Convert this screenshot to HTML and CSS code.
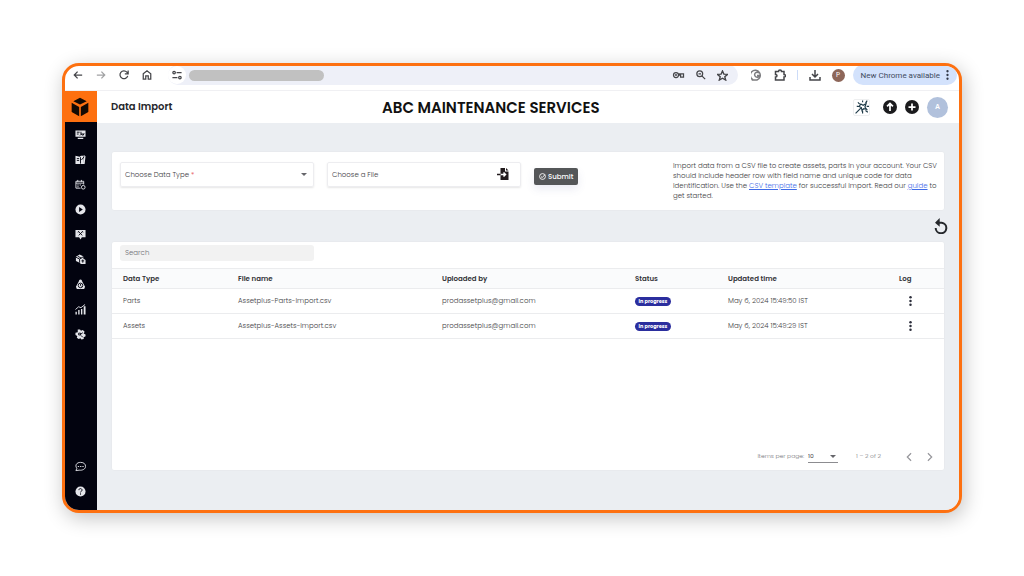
FILE: index.html
```html
<!DOCTYPE html>
<html lang="en">
<head>
    <meta charset="UTF-8">
    <meta name="viewport" content="width=device-width, initial-scale=1.0">
    <title>Data Import</title>
    <link rel="stylesheet" href="styles.css">
</head>
<body>
    <div class="browser">
        <div class="toolbar">
            <div class="nav-buttons">
                <button aria-label="Back"><svg viewBox="0 0 24 24"><path d="M22 12H4M11 4l-8 8 8 8"/></svg></button>
                <button class="disabled" aria-label="Forward"><svg viewBox="0 0 24 24"><path d="M2 12h18M13 4l8 8-8 8"/></svg></button>
                <button aria-label="Reload"><svg viewBox="0 0 24 24"><path d="M21 14a9.500 9.500 0 1 1-2-9l2 3M22 1v8h-8"/></svg></button>
                <button aria-label="Home"><svg viewBox="0 0 24 24"><path d="M3 9l9-7 9 7v13h-6v-8H9v8H3z"/></svg></button>
            </div>
            <div class="omnibox">
                <button class="site-info" aria-label="Site information"><svg viewBox="0 0 24 24"><circle cx="5" cy="6" r="3"/><path d="M11 6h12M1 18h12"/><circle cx="19" cy="18" r="3"/></svg></button>
                <span class="address"></span>
                <button aria-label="Passwords"><svg class="wide" viewBox="0 0 28 24"><circle cx="8" cy="12" r="6"/><circle cx="8" cy="12" r="1"/><path d="M14 9h12v8h-7v-5h-5"/></svg></button>
                <button aria-label="Zoom"><svg viewBox="0 0 24 24"><circle cx="9" cy="9" r="7"/><path d="M14 14l8 8M6 9h6"/></svg></button>
                <button aria-label="Bookmark"><svg class="star" viewBox="0 0 24 24"><path d="M12 2l3 7 8 .6-6 5 2 7.400-7-4-7 4 2-7.400-6-5L9 9z"/></svg></button>
            </div>
            <div class="extensions">
                <button class="muted" aria-label="Grammar"><svg viewBox="0 0 24 24"><path d="M3 21a10 10 0 1 1 9 1H3zM16 8a5 5 0 1 0 1 5h-5"/></svg></button>
                <button aria-label="Extensions"><svg viewBox="0 0 24 24"><path d="M3 5h6c0-4 6-4 6 0h5v6c4 0 4 5 0 5v6H3v-6c4 0 4-5 0-5z"/></svg></button>
                <span class="separator"></span>
                <button aria-label="Downloads"><svg viewBox="0 0 24 24"><path d="M12 2v13M6 10l6 6 6-6M2 16v6h20v-6"/></svg></button>
                <button class="profile" aria-label="Profile">P</button>
            </div>
            <button class="update">New Chrome available
                <svg viewBox="0 0 6 24"><circle cx="3" cy="3" r="2.800"/><circle cx="3" cy="12" r="2.800"/><circle cx="3" cy="21" r="2.800"/></svg>
            </button>
        </div>

        <div class="app">
            <nav class="sidebar">
                <a href="#" class="logo" aria-label="Home"><svg viewBox="0 0 24 24"><path d="M12 1l8 4-8 4-8-4zM2 7l9 5v11l-9-5zM22 7l-9 5v11l9-5z"/></svg></a>
                <a href="#" aria-label="Dashboard"><svg viewBox="0 0 24 24"><path d="M1 3h22v14H1zM6 19h12v3H6z"/><path class="cut" d="M4 7h6M4 11h4M13 6v5h7M11 14l3-3 3 3 3-4"/></svg></a>
                <a href="#" aria-label="Work orders"><svg viewBox="0 0 24 24"><path d="M1 4l9 2 3-2h5v18H1zM19 2l4 3-2 17h-3z"/><path class="cut" d="M4 10h5M4 14h5M12 7v14M14 13l6-7"/></svg></a>
                <a href="#" aria-label="Calendar"><svg viewBox="0 0 24 24"><path class="line" d="M2 5h17v7M2 5v15h10M2 9h17M6 2v4M14 2v4M5 13h3M10 13h3M5 17h3"/><circle class="line" cx="18" cy="18" r="4"/></svg></a>
                <a href="#" aria-label="Run"><svg viewBox="0 0 24 24"><circle cx="12" cy="12" r="11"/><path class="hole" d="M9 6.500l8 5.500-8 5.500z"/></svg></a>
                <a href="#" aria-label="Requests"><svg viewBox="0 0 24 24"><path d="M1 2h22v16h-8l-3 5-3-5H1z"/><path class="cut" d="M8 6l8 8M16 6l-8 8M6 7l3-2M15 5l3 2"/></svg></a>
                <a href="#" aria-label="Assets"><svg viewBox="0 0 24 24"><path d="M10 1l8 4v5l5 3v9H13l-3-3-8-4V6z"/><path class="cut" d="M2 7l8 4 8-5M10 11v8M6 5l8 4M14 15h6M17 12v7"/></svg></a>
                <a href="#" aria-label="Alerts"><svg viewBox="0 0 24 24"><path d="M12 1c3 0 3 3 4 5l6 11-2 5H4l-2-5L8 6c1-2 1-5 4-5z"/><circle class="cut" cx="12" cy="14" r="5"/><path class="cut" d="M12 11v3l2 2"/></svg></a>
                <a href="#" aria-label="Reports"><svg viewBox="0 0 24 24"><path d="M1 17h3v6H1zM7 13h3v10H7zM13 11h3v12h-3zM19 5h4v18h-4z"/><path class="line" d="M1 12l7-6 5 2 9-7"/></svg></a>
                <a href="#" aria-label="Settings"><svg viewBox="0 0 24 24"><path d="M6 1h5l2 3 4-2 4 4-2 4 4 2v4l-4 2v4l-5 1-2-3-4 2-4-3 1-4-4-2V8l5-1z"/><path class="cut" d="M8 9h4v4H8zM13 14l4 4M17 8l-4 3"/></svg></a>
                <a href="#" class="chat" aria-label="Chat"><svg viewBox="0 0 24 24"><path class="line" d="M2 21l2-5C-1 9 4 3 12 3s11 4 11 9-6 9-14 8z"/><path class="line" d="M6 12h3M11 12h3M16 12h3"/></svg></a>
                <a href="#" class="help" aria-label="Help"><svg viewBox="0 0 24 24"><circle cx="12" cy="12" r="11"/><path class="cut" d="M8.500 9c0-5 7-4 7 0 0 3-3.500 2-3.500 5M12 16v3"/></svg></a>
            </nav>

            <div class="page">
                <header class="page-header">
                    <h1>Data Import</h1>
                    <h2>ABC MAINTENANCE SERVICES</h2>
                    <div class="header-actions">
                        <button class="magic" aria-label="Assistant"><svg viewBox="0 0 24 24"><path d="M1 23l9-9M10 7l4 2 5-3-2 6 3 4-5-1-3 3-1-5-4-2zM13 1v3M5 4l3 3M21 1l-3 4M20 11h4M18 18l4 3M13 19v4M3 11h3"/></svg></button>
                        <button aria-label="Upload"><svg viewBox="0 0 24 24"><circle cx="12" cy="12" r="12"/><path class="mark" d="M12 19V7M7 11l5-5 5 5"/></svg></button>
                        <button aria-label="Add"><svg viewBox="0 0 24 24"><circle cx="12" cy="12" r="12"/><path class="mark" d="M12 6v12M6 12h12"/></svg></button>
                        <button class="avatar" aria-label="Account">A</button>
                    </div>
                </header>

                <main>
                    <form class="card import-form">
                        <div class="field select-box">
                            <label for="data-type">Choose Data Type <span class="required">*</span></label>
                            <select id="data-type">
                                <option value=""></option>
                                <option>Parts</option>
                                <option>Assets</option>
                            </select>
                        </div>
                        <div class="field">
                            <label for="csv-file">Choose a File</label>
                            <input type="file" id="csv-file">
                            <svg class="file-icon" viewBox="0 0 24 24"><path d="M7 0h9v7h7v17H7z"/><path d="M18 0l5 5h-5z"/><path class="arrow" d="M7 13h10M13 9l4 4-4 4"/><path class="tail" d="M0 13h7"/></svg>
                        </div>
                        <button type="submit" class="submit-btn">
                            <svg viewBox="0 0 24 24"><circle cx="12" cy="12" r="10"/><path d="M7 12l4 4 9-10"/></svg>
                            Submit
                        </button>
                        <p class="hint">Import data from a CSV file to create assets, parts in your account. Your CSV should include header row with field name and unique code for data identification. Use the <a href="#">CSV template</a> for successful import. Read our <a href="#">guide</a> to get started.</p>
                    </form>

                    <div class="refresh-row">
                        <button aria-label="Refresh"><svg viewBox="0 0 24 24"><path d="M6 7h7a8 8 0 1 1-9 8"/><path class="head" d="M10 0v13L3 7z"/></svg></button>
                    </div>

                    <section class="card table-card">
                        <input type="search" class="search" placeholder="Search" aria-label="Search">
                        <table>
                            <colgroup>
                                <col class="col-type"><col class="col-file"><col class="col-user"><col class="col-status"><col class="col-time"><col class="col-log">
                            </colgroup>
                            <thead>
                                <tr><th>Data Type</th><th>File name</th><th>Uploaded by</th><th>Status</th><th>Updated time</th><th>Log</th></tr>
                            </thead>
                            <tbody>
                                <tr>
                                    <td>Parts</td>
                                    <td>Assetplus-Parts-import.csv</td>
                                    <td>prodassetplus@gmail.com</td>
                                    <td><span class="badge">In progress</span></td>
                                    <td>May 6, 2024 15:49:50 IST</td>
                                    <td><button class="more" aria-label="Log"><svg viewBox="0 0 6 24"><circle cx="3" cy="3" r="3"/><circle cx="3" cy="12" r="3"/><circle cx="3" cy="21" r="3"/></svg></button></td>
                                </tr>
                                <tr>
                                    <td>Assets</td>
                                    <td>Assetplus-Assets-import.csv</td>
                                    <td>prodassetplus@gmail.com</td>
                                    <td><span class="badge">In progress</span></td>
                                    <td>May 6, 2024 15:49:29 IST</td>
                                    <td><button class="more" aria-label="Log"><svg viewBox="0 0 6 24"><circle cx="3" cy="3" r="3"/><circle cx="3" cy="12" r="3"/><circle cx="3" cy="21" r="3"/></svg></button></td>
                                </tr>
                            </tbody>
                        </table>
                        <div class="paginator">
                            <label for="page-size">Items per page:</label>
                            <div class="page-size select-box">
                                <select id="page-size">
                                    <option>10</option>
                                    <option>25</option>
                                </select>
                            </div>
                            <span class="range">1 – 2 of 2</span>
                            <button aria-label="Previous page"><svg viewBox="0 0 24 24"><path d="M17 3l-9 9 9 9"/></svg></button>
                            <button aria-label="Next page"><svg viewBox="0 0 24 24"><path d="M7 3l9 9-9 9"/></svg></button>
                        </div>
                    </section>
                </main>
            </div>
        </div>
    </div>
</body>
</html>
```
FILE: styles.css
```css
:root {
    --orange: #fd7010;
    --navy: #02030f;
    --page-bg: #ebeef2;
    --omnibox: #eef0f8;
    --text: #3c3c42;
    --line: #ebecee;
}

* {
    margin: 0;
    padding: 0;
    box-sizing: border-box;
    font-family: Poppins, Inter, sans-serif;
}

body {
    min-height: 100vh;
    display: flex;
    padding: 63px 62px;
    background-color: white;
    color: var(--text);
    font-size: 7px;
    font-weight: 300;
}

button {
    display: flex;
    align-items: center;
    justify-content: center;
    border: none;
    background: none;
    color: inherit;
    cursor: pointer;
}

svg {
    display: block;
    width: 10px;
    height: 10px;
}

.browser {
    flex: 1;
    display: flex;
    flex-direction: column;
    overflow: hidden;
    border: 3px solid var(--orange);
    border-radius: 17px;
    background-color: white;
    box-shadow: 2px 5px 20px rgba(0, 0, 0, 0.24);
}

/* browser toolbar */
.toolbar {
    height: 25px;
    display: flex;
    align-items: center;
    padding: 0 2px 6px 8px;
    border-bottom: 1px solid #f0f0f3;
}

.toolbar svg {
    fill: none;
    stroke: #45464a;
    stroke-width: 3;
}

.nav-buttons {
    display: flex;
    gap: 13px;
}

.disabled {
    opacity: 0.5;
}

.omnibox {
    flex: 1;
    height: 20px;
    display: flex;
    align-items: center;
    gap: 11px;
    margin-left: 16px;
    padding-right: 10px;
    border-radius: 10px;
    background-color: var(--omnibox);
}

.site-info {
    width: 18px;
    height: 18px;
    border-radius: 50%;
    background-color: white;
}

.address {
    width: 135px;
    height: 11px;
    margin-left: -8px;
    margin-right: auto;
    border-radius: 6px;
    background-color: #c1c1c1;
}

.toolbar .wide {
    width: 13px;
}

.toolbar .star {
    width: 11px;
    height: 11px;
}

.extensions {
    display: flex;
    align-items: center;
    gap: 11px;
    margin: 0 8px 0 13px;
}

.extensions svg {
    width: 12px;
    height: 12px;
}

.muted {
    opacity: 0.7;
}

.separator {
    width: 1px;
    height: 10px;
    background-color: #cddcf8;
}

.profile {
    width: 13px;
    height: 13px;
    border-radius: 50%;
    background-color: #8d6659;
    color: white;
    font-size: 7px;
}

.update {
    height: 20px;
    gap: 6px;
    padding: 0 8px;
    border-radius: 10px;
    background-color: #d3e2fc;
    color: #3f4b60;
    font-family: Roboto, sans-serif;
    font-size: 8px;
}

.toolbar .update svg {
    width: 3px;
    fill: #333a48;
    stroke: none;
}

/* app shell */
.app {
    flex: 1;
    display: flex;
}

.sidebar {
    flex: 0 0 32px;
    display: flex;
    flex-direction: column;
    padding-bottom: 6px;
    background-color: var(--navy);
}

.sidebar a {
    height: 25px;
    display: flex;
    align-items: center;
    justify-content: center;
    padding-right: 2px;
}

.sidebar svg {
    width: 11px;
    height: 11px;
    fill: #e4e5ea;
}

.sidebar .cut {
    fill: none;
    stroke: var(--navy);
    stroke-width: 2;
}

.sidebar .hole {
    fill: var(--navy);
}

.sidebar .line {
    fill: none;
    stroke: #e4e5ea;
    stroke-width: 2;
}

.sidebar .logo {
    height: 31px;
    background-color: var(--orange);
}

.sidebar .logo svg {
    width: 20px;
    height: 20px;
    fill: #130a04;
}

.sidebar .chat {
    margin-top: auto;
}

.page {
    flex: 1;
    min-width: 0;
    display: flex;
    flex-direction: column;
}

.page-header {
    height: 32px;
    display: flex;
    align-items: center;
    padding: 0 11px 0 14px;
    color: #111;
}

.page-header h1 {
    flex: 0 0 271px;
    color: #25262b;
    font-size: 10px;
    font-weight: 600;
}

.page-header h2 {
    font-size: 15px;
    font-weight: 600;
    white-space: nowrap;
}

.header-actions {
    display: flex;
    align-items: center;
    gap: 8px;
    margin-left: auto;
}

.header-actions svg {
    width: 14px;
    height: 14px;
    fill: #1b1b1d;
}

.header-actions .mark {
    fill: none;
    stroke: white;
    stroke-width: 3;
}

.magic {
    width: 17px;
    height: 17px;
    margin-right: 5px;
    border: 1px solid #eeeff0;
    border-radius: 2px;
}

.header-actions .magic svg {
    fill: none;
    stroke: #1f3b49;
    stroke-width: 2;
}

.header-actions .avatar {
    width: 21px;
    height: 21px;
    border-radius: 50%;
    background-color: #b1c1dc;
    color: white;
    font-size: 7px;
    font-weight: 600;
}

main {
    flex: 1;
    display: flex;
    flex-direction: column;
    padding: 28px 14px 39px;
    background-color: var(--page-bg);
}

.card {
    border: 1px solid #e8eaee;
    border-radius: 3px;
    background-color: white;
}

/* select with a drawn caret */
.select-box {
    position: relative;
}

.select-box::after {
    content: "";
    position: absolute;
    right: 6px;
    top: 10px;
    border: 3px solid transparent;
    border-top-color: #66666b;
    pointer-events: none;
}

/* import form */
.import-form {
    height: 60px;
    display: flex;
    align-items: flex-start;
    gap: 13px;
    padding: 10px 5px 10px 8px;
}

.field {
    position: relative;
    flex: 0 1 194px;
    height: 25px;
    border: 1px solid #ededf0;
    border-radius: 2px;
    box-shadow: 0 1px 2px rgba(0, 0, 0, 0.1);
}

.field label {
    position: absolute;
    left: 4px;
    top: 0;
    line-height: 23px;
    pointer-events: none;
}

.required {
    color: #e5484d;
}

.field select,
.field input {
    width: 100%;
    height: 100%;
    border: none;
    background: none;
    appearance: none;
}

.field input {
    opacity: 0;
}

.file-icon {
    position: absolute;
    right: 11px;
    top: 5px;
    width: 12px;
    height: 12px;
    fill: #211a1c;
    pointer-events: none;
}

.file-icon .arrow {
    fill: none;
    stroke: white;
    stroke-width: 3;
}

.file-icon .tail {
    stroke: #211a1c;
    stroke-width: 3;
}

.submit-btn {
    height: 17px;
    gap: 2px;
    margin-top: 6px;
    padding: 0 5px;
    border-radius: 2px;
    background-color: #545658;
    box-shadow: 0 4px 8px rgba(80, 90, 160, 0.12);
    color: white;
    font-size: 7px;
    font-weight: 500;
}

.submit-btn svg {
    width: 7px;
    height: 7px;
    fill: none;
    stroke: white;
    stroke-width: 3;
}

.hint {
    flex: 0 1 266px;
    margin-left: auto;
    margin-top: -1px;
    line-height: 10px;
}

.hint a {
    color: #3f6be8;
}

.refresh-row {
    height: 30px;
    display: flex;
    align-items: center;
    justify-content: flex-end;
    margin-right: -4px;
}

.refresh-row svg {
    width: 16px;
    height: 16px;
    fill: none;
    stroke: #25282c;
    stroke-width: 3;
}

.refresh-row .head {
    fill: #25282c;
    stroke: none;
}

/* imports table */
.table-card {
    flex: 1;
    display: flex;
    flex-direction: column;
}

.search {
    width: 194px;
    height: 16px;
    margin: 3px 8px 7px;
    padding: 0 5px;
    border: none;
    border-radius: 3px;
    background-color: #f2f2f2;
    font-size: 7px;
    font-weight: 300;
}

.search::placeholder {
    color: #6e6e74;
}

table {
    width: 100%;
    table-layout: fixed;
    border-collapse: collapse;
    border-top: 1px solid var(--line);
}

.col-type { width: 115px; }
.col-file { width: 204px; }
.col-user { width: 193px; }
.col-status { width: 93px; }
.col-time { width: 171px; }
.col-log { width: 56px; }

th,
td {
    padding: 0 0 0 11px;
    border-bottom: 1px solid var(--line);
    text-align: left;
    white-space: nowrap;
}

th {
    height: 20px;
    background-color: #fafbfc;
    color: #333338;
    font-size: 7px;
    font-weight: 600;
}

td {
    height: 25px;
}

.badge {
    display: block;
    width: 36px;
    border-radius: 5px;
    background-color: #2b2e9e;
    color: white;
    font-size: 5px;
    font-weight: 700;
    line-height: 9px;
    text-align: center;
}

.more {
    width: 22px;
}

.more svg {
    width: 3px;
    fill: #2d2f3c;
}

.paginator {
    display: flex;
    align-items: center;
    justify-content: flex-end;
    margin-top: auto;
    padding: 0 9px 7px;
    color: #77777c;
    font-size: 6px;
}

.page-size {
    width: 30px;
    margin: 0 18px 0 4px;
}

.page-size::after {
    right: 2px;
    top: 5px;
}

.page-size select {
    display: block;
    width: 100%;
    height: 13px;
    border: none;
    border-bottom: 1px solid #8c8c90;
    background: none;
    color: #444;
    font-size: 6px;
    appearance: none;
}

.range {
    margin-right: 23px;
}

.paginator button + button {
    margin-left: 11px;
}

.paginator svg {
    fill: none;
    stroke: #97979c;
    stroke-width: 3;
}
```
